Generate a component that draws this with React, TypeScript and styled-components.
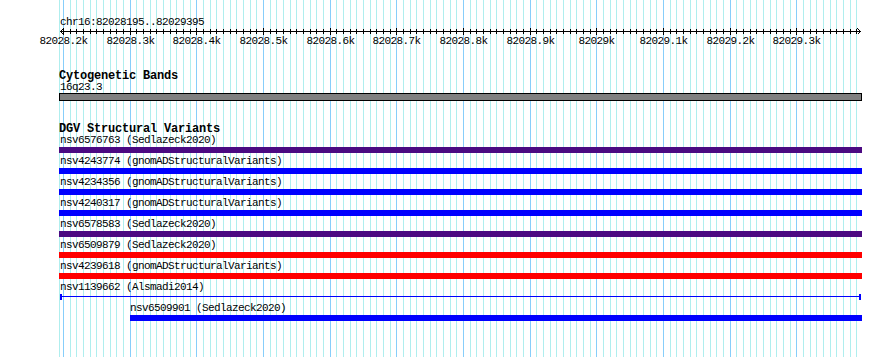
import styled, { createGlobalStyle } from 'styled-components';

const START = 82028195;
const END = 82029395;
const PAD_LEFT = 60;
const PX_PER_BP = 800 / (END - START);
const TRACK_LEFT = 59;
const TRACK_WIDTH = 803;
const PAGE_W = 890;
const PAGE_H = 357;

const bpToX = (bp: number) => Math.floor(PAD_LEFT + (bp - START) * PX_PER_BP);

type Stop = { x: number; major: boolean; bp: number };

const stops: Stop[] = [];
for (let bp = 82028200; bp <= 82029390; bp += 10) {
	stops.push({ x: bpToX(bp), major: bp % 100 === 0, bp });
}

const tickLabel = (bp: number) => {
	const k = Math.floor(bp / 1000);
	const d = (bp % 1000) / 100;
	return d === 0 ? `${k}k` : `${k}.${d}k`;
};

type Variant = {
	id: string;
	source: string;
	color: string;
	x: number;
	width: number;
	labelX: number;
	kind?: 'box' | 'line';
};

const PURPLE = '#4b0a82';
const BLUE = '#0000ff';
const RED = '#ff0000';

const full = { x: 59, width: 803, labelX: 60 };

const variants: Variant[] = [
	{ id: 'nsv6576763', source: 'Sedlazeck2020', color: PURPLE, ...full },
	{ id: 'nsv4243774', source: 'gnomADStructuralVariants', color: BLUE, ...full },
	{ id: 'nsv4234356', source: 'gnomADStructuralVariants', color: BLUE, ...full },
	{ id: 'nsv4240317', source: 'gnomADStructuralVariants', color: BLUE, ...full },
	{ id: 'nsv6578583', source: 'Sedlazeck2020', color: PURPLE, ...full },
	{ id: 'nsv6509879', source: 'Sedlazeck2020', color: RED, ...full },
	{ id: 'nsv4239618', source: 'gnomADStructuralVariants', color: RED, ...full },
	{ id: 'nsv1139662', source: 'Alsmadi2014', color: BLUE, x: 60, width: 801, labelX: 60, kind: 'line' },
	{ id: 'nsv6509901', source: 'Sedlazeck2020', color: BLUE, x: 130, width: 732, labelX: 130 },
];

export default function App() {
	return (
		<>
			<GlobalStyle />
			<Panel>
				<GridLayer width={PAGE_W} height={PAGE_H} shapeRendering='crispEdges'>
					<rect x={59} y={0} width={1} height={PAGE_H} fill='#afeeee' />
					{stops.map((s) => (
						<rect key={s.bp} x={s.x} y={0} width={1} height={PAGE_H} fill={s.major ? '#87cefa' : '#afeeee'} />
					))}
				</GridLayer>
				<Content>
					<RegionLabel>chr16:82028195..82029395</RegionLabel>
					<RulerSvg width={TRACK_WIDTH} height={7} shapeRendering='crispEdges'>
						<rect x={1} y={3} width={801} height={1} fill='#000' />
						{stops.map((s) => (
							<rect
								key={s.bp}
								x={s.x - TRACK_LEFT}
								y={s.major ? 0 : 1}
								width={1}
								height={s.major ? 7 : 5}
								fill='#000'
							/>
						))}
						<path d='M4.5 0.5 L1.5 3.5 L4.5 6.5' stroke='#000' fill='none' />
						<path d='M798.5 0.5 L801.5 3.5 L798.5 6.5' stroke='#000' fill='none' />
					</RulerSvg>
					<TickRow>
						{stops
							.filter((s) => s.major)
							.map((s) => (
								<TickLabel key={s.bp} style={{ left: s.x - TRACK_LEFT + 0.5 }}>
									{tickLabel(s.bp)}
								</TickLabel>
							))}
					</TickRow>

					<Track>
						<TrackTitle>Cytogenetic Bands</TrackTitle>
						<BandLabel style={{ marginLeft: 60 - TRACK_LEFT }}>16q23.3</BandLabel>
						<Band />
					</Track>

					<Track>
						<TrackTitle>DGV Structural Variants</TrackTitle>
						{variants.map((v) => (
							<FeatureRow key={v.id}>
								<FeatureLabel style={{ marginLeft: v.labelX - TRACK_LEFT }}>
									{v.id} ({v.source})
								</FeatureLabel>
								{v.kind === 'line' ? (
									<LineFeature $color={v.color} style={{ marginLeft: v.x - TRACK_LEFT, width: v.width }}>
										<EndMark />
										<Stem />
										<EndMark />
									</LineFeature>
								) : (
									<FeatureBar $color={v.color} style={{ marginLeft: v.x - TRACK_LEFT, width: v.width }} />
								)}
							</FeatureRow>
						))}
					</Track>
				</Content>
			</Panel>
		</>
	);
}

const GlobalStyle = createGlobalStyle`
	html, body {
		margin: 0;
		padding: 0;
		background: #ffffff;
	}

	body {
		font-family: "Liberation Mono", "DejaVu Sans Mono", monospace;
		color: #000;
	}
`;

const Panel = styled.div`
	position: relative;
	width: ${PAGE_W}px;
	height: ${PAGE_H}px;
	overflow: hidden;
	background: #ffffff;
`;

const GridLayer = styled.svg`
	position: absolute;
	top: 0;
	left: 0;
	z-index: 0;
`;

const Content = styled.div`
	position: relative;
	z-index: 1;
	display: flex;
	flex-direction: column;
	width: ${TRACK_WIDTH}px;
	padding-top: 16px;
	padding-left: ${TRACK_LEFT}px;
`;

const smallText = `
	font-size: 11px;
	letter-spacing: -0.6px;
	white-space: nowrap;
`;

const RegionLabel = styled.div`
	${smallText}
	line-height: 12px;
	height: 12px;
	padding-left: 1px;
`;

const RulerSvg = styled.svg`
	display: block;
`;

const TickRow = styled.div`
	position: relative;
	height: 13px;
`;

const TickLabel = styled.span`
	${smallText}
	position: absolute;
	top: 0;
	line-height: 13px;
	transform: translateX(-50%);
`;

const Track = styled.section`
	display: flex;
	flex-direction: column;
	margin-top: 23px;
`;

const TrackTitle = styled.h3`
	margin: 0;
	font-size: 12px;
	font-weight: bold;
	letter-spacing: -0.2px;
	line-height: 10px;
	height: 10px;
	white-space: nowrap;
`;

const FeatureLabel = styled.div`
	${smallText}
	line-height: 13px;
	height: 13px;
`;

const BandLabel = styled(FeatureLabel)`
	line-height: 12px;
	height: 12px;
`;

const Band = styled.div`
	box-sizing: border-box;
	width: ${TRACK_WIDTH}px;
	height: 8px;
	border: 1px solid #000;
	background: #808080;
`;

const FeatureRow = styled.div`
	display: flex;
	flex-direction: column;
	margin-bottom: 2px;
`;

const FeatureBar = styled.div<{ $color: string }>`
	height: 6px;
	background: ${({ $color }) => $color};
`;

const LineFeature = styled.div<{ $color: string }>`
	display: flex;
	align-items: flex-start;
	height: 6px;
	color: ${({ $color }) => $color};
`;

const EndMark = styled.span`
	width: 2px;
	height: 6px;
	background: currentColor;
`;

const Stem = styled.span`
	flex: 1;
	height: 1px;
	margin-top: 2px;
	background: currentColor;
`;
